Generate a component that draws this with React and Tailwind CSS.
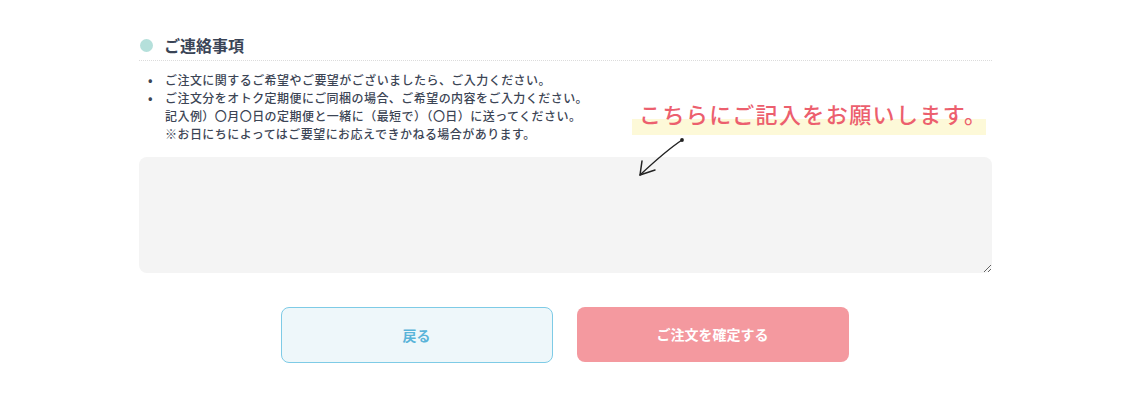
import React from "react";

const notes = [
  "ご注文に関するご希望やご要望がございましたら、ご入力ください。",
  "ご注文分をオトク定期便にご同梱の場合、ご希望の内容をご入力ください。",
];

function Arrow() {
  return (
    <svg width="50" height="44" viewBox="0 0 50 44" className="absolute left-[6px] top-[39px]" fill="none">
      <circle cx="44" cy="4" r="1.9" fill="#222" />
      <path d="M44 4 C 32 12, 18 24, 2 39" stroke="#222" strokeWidth="1.5" strokeLinecap="round" />
      <path d="M4 25 L2 39 L17 34" stroke="#222" strokeWidth="1.5" strokeLinecap="round" strokeLinejoin="round" />
    </svg>
  );
}

export default function App() {
  return (
    <div className="w-[1135px] h-[400px] bg-white font-['Noto_Sans_CJK_JP','Noto_Sans',sans-serif]">
      <div className="ml-[139px] w-[853px] pt-[34px]">
        {/* Heading */}
        <div className="flex items-center gap-[11px] pb-[4px] border-b border-dotted border-[#dcdcdc]">
          <span className="w-[13px] h-[13px] rounded-full bg-[#b5e0db] ml-[1px]" />
          <h2 className="text-[16px] font-bold text-[#3a4456] leading-[22px]">ご連絡事項</h2>
        </div>

        {/* Notes + annotation */}
        <div className="relative mt-[10px]">
          <ul className="text-[12px] leading-[18px] font-medium text-[#3c4555] tracking-[0.45px]">
            {notes.map((t) => (
              <li key={t} className="flex">
                <span className="w-[26px] pl-[9px] font-bold">•</span>
                <span>{t}</span>
              </li>
            ))}
            <li className="pl-[26px]">記入例）〇月〇日の定期便と一緒に（最短で）（〇日）に送ってください。</li>
            <li className="pl-[26px]">※お日にちによってはご要望にお応えできかねる場合があります。</li>
          </ul>

          <div className="absolute left-[493px] top-[26px]">
            <div className="relative">
              <span className="absolute left-0 top-[22px] w-[354px] h-[16px] bg-[#fdf9d8]" />
              <p className="relative pl-[7px] text-[22px] leading-[32px] font-medium text-[#ec5f6e] tracking-[1.4px] whitespace-nowrap">
                こちらにご記入をお願いします。
              </p>
              <Arrow />
            </div>
          </div>
        </div>

        {/* Textarea */}
        <textarea className="block mt-[14px] w-full h-[116px] rounded-[8px] bg-[#f4f4f4] outline-none p-3 text-[14px]" />

        {/* Buttons */}
        <div className="flex justify-center gap-[24px] mt-[34px] pr-[2px]">
          <button className="w-[272px] h-[56px] rounded-[8px] border border-[#7ecbe6] bg-[#eef7fa] text-[14px] font-bold text-[#5ab4d9]">
            戻る
          </button>
          <button className="w-[272px] h-[55px] rounded-[8px] bg-[#f4999f] text-[14px] font-bold text-white">
            ご注文を確定する
          </button>
        </div>
      </div>
    </div>
  );
}
